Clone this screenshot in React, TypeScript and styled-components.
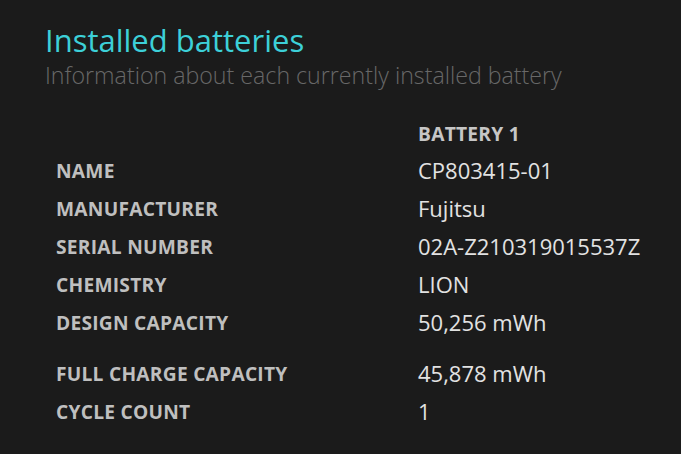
import React from "react";
import styled, { createGlobalStyle } from "styled-components";

const GlobalStyle = createGlobalStyle`
  html, body {
    margin: 0;
    padding: 0;
    background: #1b1b1b;
  }
  body {
    font-family: "Open Sans", "Noto Sans", sans-serif;
  }
`;

const Page = styled.div`
  width: 681px;
  height: 454px;
  box-sizing: border-box;
  padding: 20px 0 0 45px;
  background: #1b1b1b;
  overflow: hidden;
`;

const Title = styled.h1`
  margin: 0;
  font-size: 31px;
  font-weight: 400;
  line-height: 40px;
  color: #3dd0d8;
`;

const Subtitle = styled.p`
  margin: 0;
  font-size: 23.2px;
  font-weight: 300;
  line-height: 30px;
  color: #686868;
`;

const Table = styled.div`
  display: grid;
  grid-template-columns: 362px auto;
  margin: 25px 0 0 11px;
`;

const Row = styled.div<{ $gap?: boolean }>`
  display: contents;
  & > * {
    height: ${(p) => (p.$gap ? "51px" : "38px")};
    padding-top: ${(p) => (p.$gap ? "13px" : "0")};
    box-sizing: border-box;
  }
`;

const Label = styled.div`
  display: flex;
  align-items: center;
  font-size: 19.2px;
  font-weight: 700;
  letter-spacing: 0.25px;
  color: #bfbfbf;
`;

const Value = styled.div`
  display: flex;
  align-items: center;
  font-size: 22px;
  font-weight: 400;
  color: #e2e2e2;
`;

const Header = styled(Label)`
  height: 36px !important;
  color: #c6c6c6;
`;

const rows: { label: string; value: string; gap?: boolean }[] = [
  { label: "NAME", value: "CP803415-01" },
  { label: "MANUFACTURER", value: "Fujitsu" },
  { label: "SERIAL NUMBER", value: "02A-Z210319015537Z" },
  { label: "CHEMISTRY", value: "LION" },
  { label: "DESIGN CAPACITY", value: "50,256 mWh" },
  { label: "FULL CHARGE CAPACITY", value: "45,878 mWh", gap: true },
  { label: "CYCLE COUNT", value: "1" },
];

const App: React.FC = () => {
  return (
    <Page>
      <GlobalStyle />
      <Title>Installed batteries</Title>
      <Subtitle>Information about each currently installed battery</Subtitle>
      <Table>
        <Row>
          <Header />
          <Header>BATTERY 1</Header>
        </Row>
        {rows.map((r) => (
          <Row key={r.label} $gap={r.gap}>
            <Label>{r.label}</Label>
            <Value>{r.value}</Value>
          </Row>
        ))}
      </Table>
    </Page>
  );
};

export default App;
